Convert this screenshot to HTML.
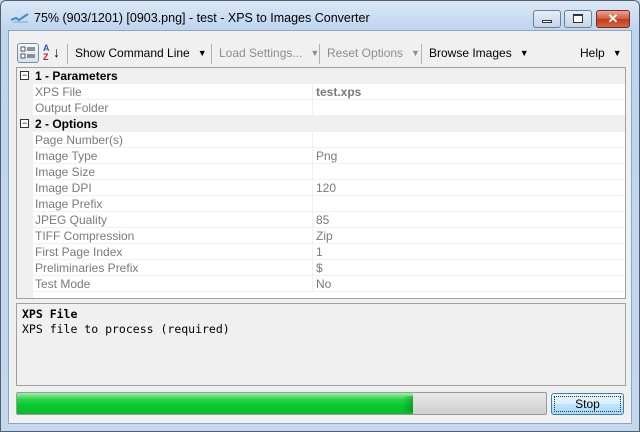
<!DOCTYPE html>
<html><head><style>
*{margin:0;padding:0;box-sizing:border-box}
body{width:640px;height:432px;overflow:hidden;background:#c4d9ef;font-family:"Liberation Sans",sans-serif;font-size:12px;position:relative}
.frame{position:absolute;left:0;top:0;width:640px;height:432px;border:1px solid #555e6a;border-radius:6px 6px 0 0;background:linear-gradient(#dbe8f6,#bcd4ee 30px,#c3d8ef)}
.title{position:absolute;left:34px;top:11px;font-size:12.5px;color:#000}
.client{position:absolute;left:8px;top:30px;width:624px;height:394px;background:#f0f0f0;border:1px solid #8ea6c0}
.tb{position:absolute;top:46px;font-size:12px;color:#000}
.dis{color:#8d8d8d}
.sep{position:absolute;top:44px;width:1px;height:20px;background:#b0b0b0}
.arr{font-size:9px;margin-left:8px;vertical-align:1px}
.grid{position:absolute;left:16px;top:67px;width:610px;height:232px;border:1px solid #a0a0a0;background:#fff}
.row{position:absolute;left:0;width:608px;height:16px;border-bottom:1px solid #f0f0f0}
.row .n{position:absolute;left:18px;top:1px;color:#7a7a7a;font-size:12px}
.row .v{position:absolute;left:299px;top:1px;color:#7a7a7a}
.row .d{position:absolute;left:295px;top:0;width:1px;height:16px;background:#f0f0f0}
.cat{background:#f0f0f0}
.cat .n{left:18px;color:#000;font-weight:bold}
.mar{position:absolute;left:0;top:0;width:16px;height:230px;background:#f0f0f0}
.box{position:absolute;left:3px;top:3px;width:9px;height:9px;border:1px solid #333;background:#fff;font-size:9px;line-height:6px;text-align:center}
.desc{position:absolute;left:16px;top:303px;width:610px;height:83px;border:1px solid #a0a0a0;font-family:"DejaVu Sans Mono","Liberation Mono",monospace;font-size:11.5px;padding:3px 5px;line-height:15px}
.prog{position:absolute;left:16px;top:392px;width:531px;height:23px;border:1px solid #9a9a9a;background:linear-gradient(#e8e8e8,#cfcfcf);border-radius:2px}
.bar{position:absolute;left:0;top:0;width:396px;height:21px;background:linear-gradient(#9ef0a8,#2fd24a 30%,#06c92c 60%,#10b830);}
.bar:after{content:"";position:absolute;right:0;top:3px;width:10px;height:16px;background:linear-gradient(90deg,rgba(0,100,20,0),rgba(0,110,20,.4))}
.stop{position:absolute;left:551px;top:393px;width:73px;height:22px;border:1px solid #3c7fb1;border-radius:3px;background:linear-gradient(#eaf6fd,#d9f0fc 50%,#bee6fd 51%,#a7d9f5);text-align:center;line-height:20px;font-size:12px}
.stop span{position:absolute;left:2px;top:2px;right:2px;bottom:2px;border:1px dotted #333}
.btn{position:absolute;top:10px;height:18px;border:1px solid #6a7f99;border-radius:3px;background:linear-gradient(#e6eef8,#c4d4e8)}
</style></head><body>
<div class="frame"></div>
<svg style="position:absolute;left:10px;top:12px" width="20" height="12"><path d="M1 8 L6 6 L9 8 L18 2" stroke="#3a8bd0" stroke-width="2" fill="none"/><path d="M3 10 L18 10" stroke="#7ab" stroke-width="1"/></svg>
<div class="title">75% (903/1201) [0903.png] - test - XPS to Images Converter</div>
<div class="btn" style="left:533px;width:28px"><div style="position:absolute;left:8px;top:9px;width:10px;height:3px;border:1px solid #333;background:#fff"></div></div>
<div class="btn" style="left:564px;width:28px"><div style="position:absolute;left:8px;top:3px;width:10px;height:9px;border:1px solid #333;border-top-width:2px;background:#fff"></div></div>
<div class="btn" style="left:596px;width:34px;border-color:#7a2a20;background:linear-gradient(#e8a593,#d35a3c 50%,#c23a1b 51%,#d8653f)"><div style="color:#fff;font-weight:bold;text-align:center;font-size:13px;line-height:15px">✕</div></div>
<div class="client"></div>
<div style="position:absolute;left:17px;top:43px;width:22px;height:20px;border:1px solid #7a8da8;border-radius:3px;background:linear-gradient(#f4f8fc,#d5e2f1)"><svg width="20" height="18"><rect x="3" y="3" width="4" height="4" fill="#fff" stroke="#333" stroke-width=".8"/><rect x="3" y="10" width="4" height="4" fill="#fff" stroke="#333" stroke-width=".8"/><path d="M9 4h8M9 6h8M9 11h8M9 13h8" stroke="#333"/></svg></div>
<div style="position:absolute;left:43px;top:44px;font-size:9px;line-height:9px;color:#2a5fb0;font-weight:bold">A<br><span style="color:#c02020">Z</span></div>
<div style="position:absolute;left:53px;top:44px;font-size:14px">↓</div>
<div class="sep" style="left:67px"></div>
<div class="tb" style="left:75px">Show Command Line<span class="arr">▼</span></div>
<div class="sep" style="left:211px"></div>
<div class="tb dis" style="left:219px">Load Settings...<span class="arr">▼</span></div>
<div class="sep" style="left:319px"></div>
<div class="tb dis" style="left:327px">Reset Options<span class="arr">▼</span></div>
<div class="sep" style="left:421px"></div>
<div class="tb" style="left:429px">Browse Images<span class="arr">▼</span></div>
<div class="tb" style="left:580px">Help<span class="arr">▼</span></div>
<div class="grid">
<div class="mar"></div>
<div class="row cat" style="top:0"><div class="box">−</div><div class="n">1 - Parameters</div></div>
<div class="row" style="top:16px"><div class="n">XPS File</div><div class="d"></div><div class="v" style="font-weight:bold">test.xps</div></div>
<div class="row" style="top:32px"><div class="n">Output Folder</div><div class="d"></div></div>
<div class="row cat" style="top:48px"><div class="box">−</div><div class="n">2 - Options</div></div>
<div class="row" style="top:64px"><div class="n">Page Number(s)</div><div class="d"></div></div>
<div class="row" style="top:80px"><div class="n">Image Type</div><div class="d"></div><div class="v">Png</div></div>
<div class="row" style="top:96px"><div class="n">Image Size</div><div class="d"></div></div>
<div class="row" style="top:112px"><div class="n">Image DPI</div><div class="d"></div><div class="v">120</div></div>
<div class="row" style="top:128px"><div class="n">Image Prefix</div><div class="d"></div></div>
<div class="row" style="top:144px"><div class="n">JPEG Quality</div><div class="d"></div><div class="v">85</div></div>
<div class="row" style="top:160px"><div class="n">TIFF Compression</div><div class="d"></div><div class="v">Zip</div></div>
<div class="row" style="top:176px"><div class="n">First Page Index</div><div class="d"></div><div class="v">1</div></div>
<div class="row" style="top:192px"><div class="n">Preliminaries Prefix</div><div class="d"></div><div class="v">$</div></div>
<div class="row" style="top:208px"><div class="n">Test Mode</div><div class="d"></div><div class="v">No</div></div>
</div>
<div class="desc"><b>XPS File</b><br>XPS file to process (required)</div>
<div class="prog"><div class="bar"></div></div>
<div class="stop"><span></span>Stop</div>
</body></html>
